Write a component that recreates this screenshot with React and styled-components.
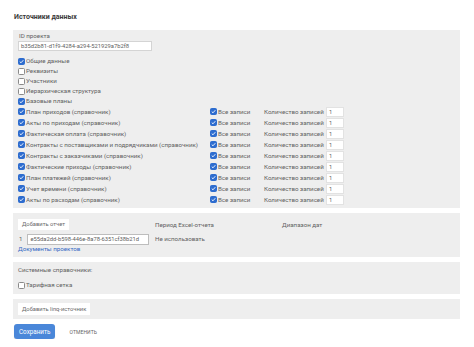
import React from 'react';
import styled, { createGlobalStyle } from 'styled-components';

const GlobalStyle = createGlobalStyle`
    body {
        margin: 0;
        background: #fff;
        font-family: Roboto, "Noto Sans", sans-serif;
        color: #626262;
        font-size: 6.2px;
    }
`;

const Page = styled.div`
    width: 474px;
    padding: 12px 14px 0 13px;
    box-sizing: border-box;
`;

const Title = styled.h3`
    margin: 0 0 0 1px;
    height: 18px;
    line-height: 10px;
    font-size: 7px;
    font-weight: 700;
    color: #3a3a3a;
`;

const Panel = styled.section`
    background: #eeeeee;
    padding: ${(p) => p.$pad || '2px 5px 3px'};
    margin-bottom: 5px;
`;

const FieldLabel = styled.div`
    line-height: 9px;
    padding-left: 1px;
`;

const TextInput = styled.div`
    box-sizing: border-box;
    width: ${(p) => p.$w}px;
    height: ${(p) => p.$h || 10}px;
    line-height: ${(p) => (p.$h || 10) - 2}px;
    background: #fff;
    border: 1px solid ${(p) => p.$border || '#d4d4d4'};
    padding: 0 2px;
    font-size: 5.8px;
    color: #606060;
    white-space: nowrap;
    overflow: hidden;
`;

const CheckList = styled.div`
    margin-top: 5px;
`;

const CheckRow = styled.label`
    display: flex;
    align-items: center;
    height: ${(p) => p.$h || 10}px;
    white-space: nowrap;
`;

const Box = styled.span`
    box-sizing: border-box;
    width: 7px;
    height: 7px;
    margin-right: 1px;
    flex: none;
    border-radius: 1.5px;
    display: flex;
    align-items: center;
    justify-content: center;
    background: ${(p) => (p.$on ? '#2d6ccf' : '#fff')};
    border: 1px solid ${(p) => (p.$on ? '#2d6ccf' : '#8a8a8a')};
`;

const TableRow = styled.div`
    display: grid;
    grid-template-columns: 192px 54px 62px 18px;
    align-items: center;
    height: 11px;
`;

const CountLabel = styled.span`
    white-space: nowrap;
`;

const Btn = styled.div`
    display: inline-block;
    background: #fff;
    height: ${(p) => p.$h || 11}px;
    line-height: ${(p) => p.$h || 11}px;
    padding: 0 4px;
    font-size: 5.8px;
    color: #6a6a6a;
    white-space: nowrap;
`;

const ReportGrid = styled.div`
    display: grid;
    grid-template-columns: 137px 127px 1fr;
    grid-template-rows: 13px 15px;
    align-items: end;
`;

const Header = styled.span`
    line-height: 9px;
`;

const ReportRow = styled.div`
    display: flex;
    align-items: center;
    gap: 5px;
    padding-left: 1px;
    height: 12px;
`;

const Cell = styled.span`
    line-height: 12px;
`;

const Link = styled.a`
    display: block;
    color: #3469c4;
    text-decoration: none;
    line-height: 9px;
    height: 9px;
`;

const SysTitle = styled.div`
    line-height: 9px;
    margin-bottom: 5px;
`;

const Actions = styled.div`
    display: flex;
    align-items: center;
    gap: 14px;
    margin: 1px 0 0 1px;
`;

const SaveButton = styled.button`
    height: 15px;
    padding: 0 5px;
    border: none;
    border-radius: 3px;
    background: #4a87d9;
    color: #fff;
    font-family: inherit;
    font-size: 6.3px;
    box-shadow: 0 1px 1px rgba(0, 0, 0, 0.15);
`;

const CancelLink = styled.span`
    font-size: 5px;
    text-transform: uppercase;
    color: #666;
    letter-spacing: 0.1px;
`;

function Check({ on, children, h }) {
    return (
        <CheckRow $h={h}>
            <Box $on={on}>
                {on && (
                    <svg width="5" height="5" viewBox="0 0 10 10">
                        <path
                            d="M1.5 5.2 L4 7.6 L8.6 2.4"
                            fill="none"
                            stroke="#fff"
                            strokeWidth="1.8"
                        />
                    </svg>
                )}
            </Box>
            {children}
        </CheckRow>
    );
}

const general = [
    ['Общие данные', true],
    ['Реквизиты', false],
    ['Участники', false],
    ['Иерархическая структура', false],
    ['Базовые планы', true],
];

const references = [
    'План приходов (справочник)',
    'Акты по приходам (справочник)',
    'Фактическая оплата (справочник)',
    'Контракты с поставщиками и подрядчиками (справочник)',
    'Контракты с заказчиками (справочник)',
    'Фактические приходы (справочник)',
    'План платежей (справочник)',
    'Учет времени (справочник)',
    'Акты по расходам (справочник)',
];

export default function App() {
    return (
        <>
            <GlobalStyle />
            <Page>
                <Title>Источники данных</Title>
                <Panel>
                    <FieldLabel>ID проекта</FieldLabel>
                    <TextInput $w={134}>b35d2b81-d1f9-4284-a294-521929a7b2f8</TextInput>
                    <CheckList>
                        {general.map(([name, on]) => (
                            <Check key={name} on={on}>
                                {name}
                            </Check>
                        ))}
                        {references.map((name) => (
                            <TableRow key={name}>
                                <Check on h={11}>
                                    {name}
                                </Check>
                                <Check on h={11}>
                                    Все записи
                                </Check>
                                <CountLabel>Количество записей</CountLabel>
                                <TextInput $w={18} $h={10} $border="#e2e2e2">
                                    1
                                </TextInput>
                            </TableRow>
                        ))}
                    </CheckList>
                </Panel>
                <Panel $pad="4px 5px 3px">
                    <ReportGrid>
                        <div>
                            <Btn>Добавить отчет</Btn>
                        </div>
                        <Header>Период Excel-отчета</Header>
                        <Header>Диапазон дат</Header>
                        <ReportRow>
                            <span>1</span>
                            <TextInput $w={122} $h={11} $border="#bdbdbd">
                                e55da2dd-b598-446e-8a78-6351cf38b21d
                            </TextInput>
                        </ReportRow>
                        <Cell>Не использовать</Cell>
                        <span />
                    </ReportGrid>
                    <Link href="#">Документы проектов</Link>
                </Panel>
                <Panel $pad="4px 5px 4px">
                    <SysTitle>Системные справочники:</SysTitle>
                    <Check>Тарифная сетка</Check>
                </Panel>
                <Panel $pad="4px 5px 4px">
                    <Btn $h={12}>Добавить linq-источник</Btn>
                </Panel>
                <Actions>
                    <SaveButton>Сохранить</SaveButton>
                    <CancelLink>отменить</CancelLink>
                </Actions>
            </Page>
        </>
    );
}
